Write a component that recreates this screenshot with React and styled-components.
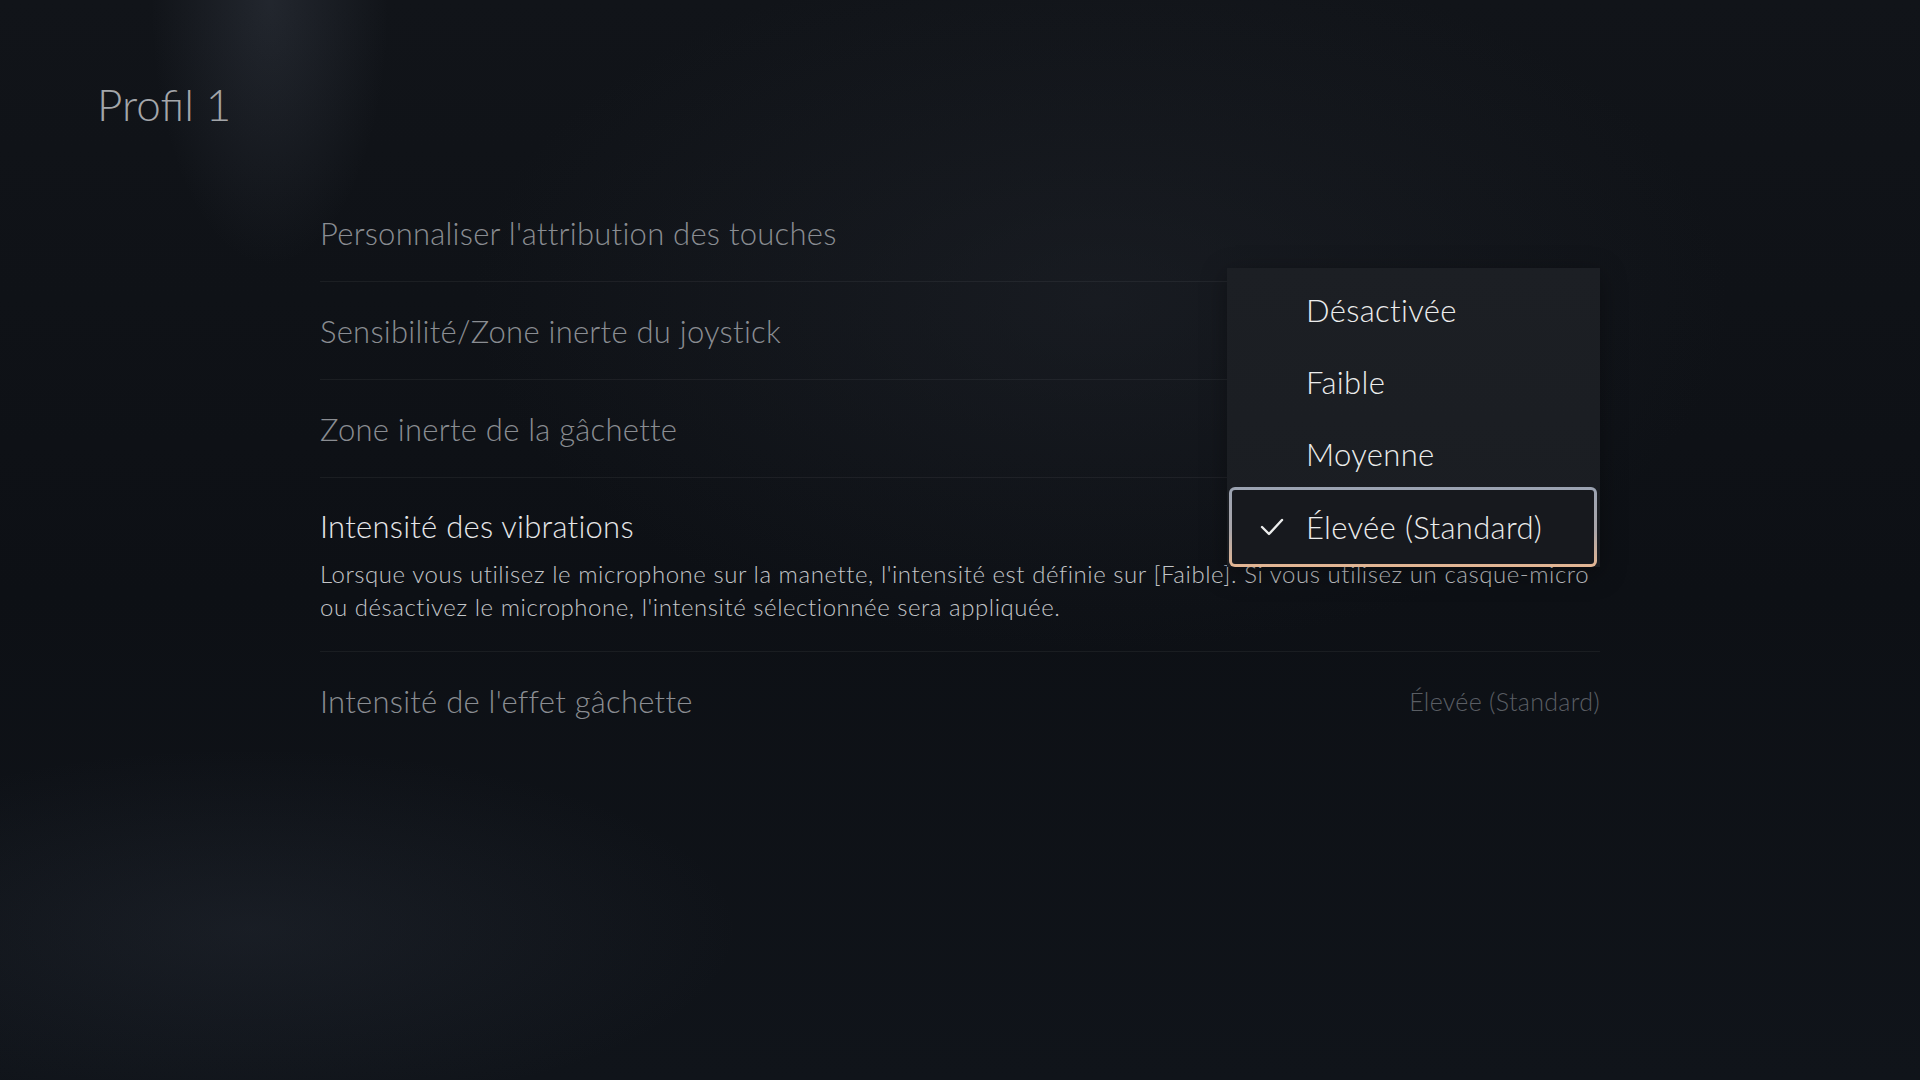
import React from "react";
import styled, { createGlobalStyle } from "styled-components";

const GlobalStyle = createGlobalStyle`
  html, body {
    margin: 0;
    padding: 0;
    background: #0d1015;
  }
  * { box-sizing: border-box; }
`;

const Screen = styled.div`
  width: 1920px;
  height: 1080px;
  overflow: hidden;
  font-family: Lato, "Open Sans", sans-serif;
  font-weight: 300;
  background:
    radial-gradient(ellipse 170px 380px at 270px 0px, rgba(120, 130, 150, 0.17), rgba(0, 0, 0, 0) 70%),
    radial-gradient(ellipse 700px 260px at 250px 930px, rgba(90, 100, 120, 0.13), rgba(0, 0, 0, 0) 70%),
    radial-gradient(ellipse 900px 500px at 1100px 300px, rgba(40, 44, 52, 0.35), rgba(0, 0, 0, 0) 70%),
    linear-gradient(180deg, #111419 0%, #0d1015 55%, #10141a 100%);
`;

const Title = styled.h1`
  margin: 0;
  padding: 76px 0 0 97px;
  font-size: 44px;
  line-height: 56px;
  font-weight: 300;
  color: #a3a6aa;
`;

const List = styled.div`
  position: relative;
  width: 1280px;
  margin: 52px 0 0 320px;
`;

const Row = styled.div`
  display: flex;
  flex-direction: column;
  justify-content: center;
  min-height: 98px;
  padding: ${(p) => (p.expanded ? "29px 0 28px" : "0")};
  border-bottom: ${(p) => (p.last ? "none" : "1px solid rgba(255, 255, 255, 0.055)")};
`;

const RowHead = styled.div`
  display: flex;
  justify-content: space-between;
  align-items: center;
`;

const Label = styled.div`
  font-size: 31px;
  line-height: 38px;
  letter-spacing: 0.25px;
  color: ${(p) => (p.active ? "#e6e7e9" : "#8a8d92")};
`;

const Value = styled.div`
  font-size: 25px;
  line-height: 38px;
  letter-spacing: 0.3px;
  color: #5a5e64;
`;

const Description = styled.p`
  margin: 12px 0 0;
  font-size: 24px;
  line-height: 33px;
  letter-spacing: 0.55px;
  color: #c3c5c8;
  white-space: nowrap;
`;

const Dropdown = styled.div`
  position: absolute;
  left: 907px;
  top: 84px;
  width: 373px;
  padding: 6px 3px 0 2px;
  background: linear-gradient(180deg, #1c1f24 0%, #1a1d22 100%);
  box-shadow: 0 6px 24px rgba(0, 0, 0, 0.35);
`;

const Option = styled.div`
  display: flex;
  align-items: center;
  height: ${(p) => (p.selected ? "80px" : "72px")};
  margin-top: ${(p) => (p.selected ? "-3px" : "0")};
  padding-left: 74px;
  position: relative;
  font-size: 31px;
  letter-spacing: 0.35px;
  color: #eceded;
  border-radius: 6px;
  border: 3px solid transparent;
  ${(p) =>
    p.selected &&
    `
    background:
      linear-gradient(#17191e, #17191e) padding-box,
      linear-gradient(180deg, #9ba3b2 0%, #aaa6aa 55%, #e4b693 100%) border-box;
  `}
`;

const Check = styled.svg`
  position: absolute;
  left: 28px;
  top: 50%;
  margin-top: -10px;
  width: 24px;
  height: 20px;
`;

const options = ["Désactivée", "Faible", "Moyenne", "Élevée (Standard)"];

export default function App() {
  return (
    <>
      <GlobalStyle />
      <Screen>
        <Title>Profil 1</Title>
        <List>
          <Row>
            <Label>Personnaliser l'attribution des touches</Label>
          </Row>
          <Row>
            <Label>Sensibilité/Zone inerte du joystick</Label>
          </Row>
          <Row>
            <Label>Zone inerte de la gâchette</Label>
          </Row>
          <Row expanded>
            <Label active>Intensité des vibrations</Label>
            <Description>
              Lorsque vous utilisez le microphone sur la manette, l'intensité est définie sur [Faible]. Si vous utilisez un casque-micro
              <br />
              ou désactivez le microphone, l'intensité sélectionnée sera appliquée.
            </Description>
          </Row>
          <Row last>
            <RowHead>
              <Label>Intensité de l'effet gâchette</Label>
              <Value>Élevée (Standard)</Value>
            </RowHead>
          </Row>

          <Dropdown>
            {options.map((o, i) => {
              const selected = i === options.length - 1;
              return (
                <Option key={o} selected={selected}>
                  {selected && (
                    <Check viewBox="0 0 24 20">
                      <polyline points="2,10 9,17 22,3" fill="none" stroke="#eceded" strokeWidth="2.4" strokeLinecap="round" strokeLinejoin="round" />
                    </Check>
                  )}
                  {o}
                </Option>
              );
            })}
          </Dropdown>
        </List>
      </Screen>
    </>
  );
}
